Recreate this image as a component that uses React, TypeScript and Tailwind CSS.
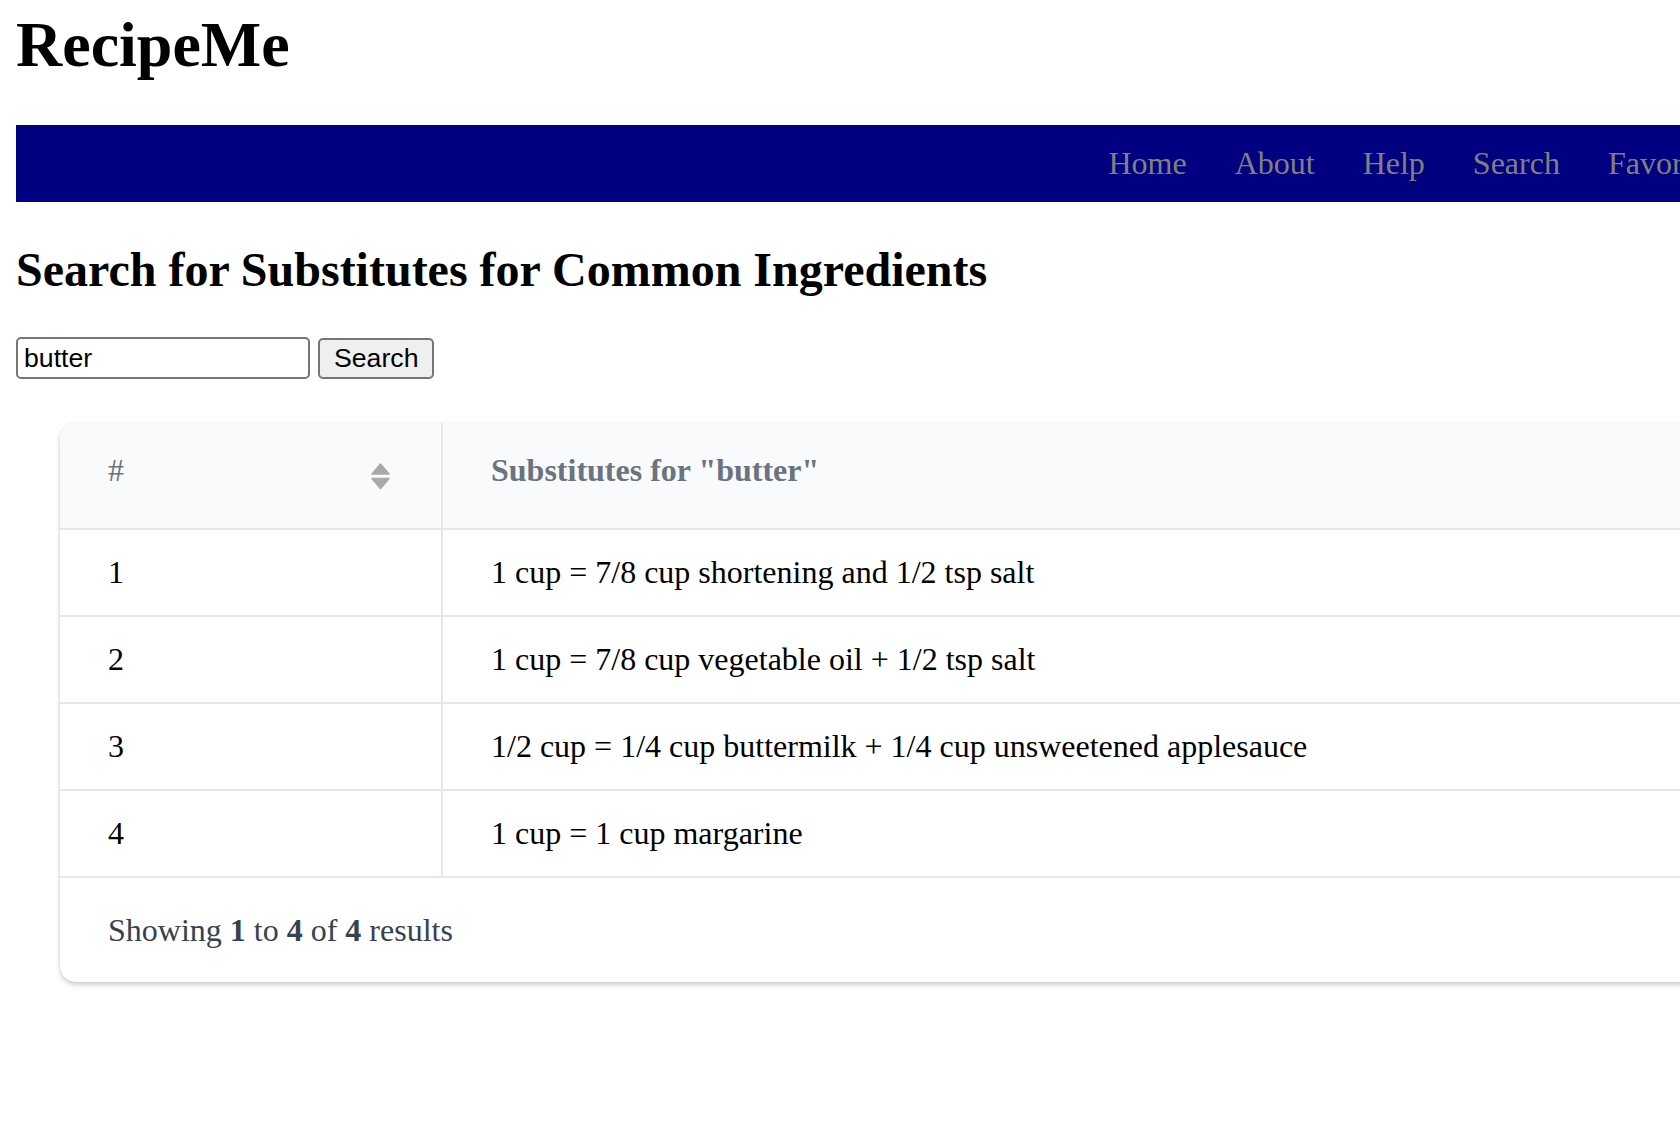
const rows = [
  "1 cup = 7/8 cup shortening and 1/2 tsp salt",
  "1 cup = 7/8 cup vegetable oil + 1/2 tsp salt",
  "1/2 cup = 1/4 cup buttermilk + 1/4 cup unsweetened applesauce",
  "1 cup = 1 cup margarine",
];

const links = ["Home", "About", "Help", "Search", "Favorites"];

function SortIcon() {
  return (
    <svg width="19" height="27" viewBox="0 0 19 27" aria-hidden="true">
      <path d="M9.5 1 L18 11 H1 Z" fill="#a9a9a9" stroke="#a9a9a9" strokeWidth="1.5" strokeLinejoin="round" />
      <path d="M1 15.5 H18 L9.5 25.5 Z" fill="#a9a9a9" stroke="#a9a9a9" strokeWidth="1.5" strokeLinejoin="round" />
    </svg>
  );
}

export default function App() {
  const query = "butter";

  return (
    <div className="h-[1134px] w-[1680px] overflow-hidden bg-white px-4 pt-2 font-['Liberation_Serif',serif] leading-[normal] text-black">
      <h1 className="mb-[43px] text-[64px] font-bold leading-[normal]">RecipeMe</h1>

      <nav className="flex h-[77px] w-[1735px] items-center justify-end bg-[#000080]">
        {links.map((link) => (
          <a key={link} className="px-6 text-[32px] leading-[normal] text-[#808080]">
            {link}
          </a>
        ))}
      </nav>

      <h2 className="my-[40px] text-[48px] font-bold leading-[normal]">
        Search for Substitutes for Common Ingredients
      </h2>

      <form className="flex items-center gap-[8px] font-['Liberation_Sans',Arial,sans-serif] text-[26.67px]">
        <input
          type="text"
          defaultValue={query}
          className="h-[42px] w-[294px] rounded-[5px] border-2 border-[#767676] px-[6px] text-black outline-none"
        />
        <button
          type="button"
          className="h-[41px] rounded-[5px] border-2 border-[#767676] bg-[#efefef] px-[14px] leading-[normal] text-black"
        >
          Search
        </button>
      </form>

      <div className="ml-[44px] mt-[44px] w-[1800px] overflow-hidden rounded-[16px] bg-white shadow-[0_3px_5px_rgba(0,0,0,0.18),0_0_2px_rgba(0,0,0,0.12)]">
        <div className="grid grid-cols-[383px_1fr] border-b-2 border-[#e5e7eb] bg-[#f9fafb]">
          <div className="flex h-[105px] items-center justify-between border-r-2 border-[#e5e7eb] pl-[48px] pr-[51px] text-[32px] text-[#6b7280]">
            <span className="pb-[10px]">#</span>
            <span className="pt-[2px]">
              <SortIcon />
            </span>
          </div>
          <div className="flex h-[105px] items-center px-[48px] pb-[10px] text-[32px] font-bold text-[#6b7280]">
            Substitutes for "{query}"
          </div>
        </div>

        {rows.map((row, i) => (
          <div key={i} className="grid grid-cols-[383px_1fr] border-b-2 border-[#e5e7eb]">
            <div className="flex h-[85px] items-center border-r-2 border-[#e5e7eb] px-[48px] text-[32px]">
              {i + 1}
            </div>
            <div className="flex h-[85px] items-center px-[48px] text-[32px]">{row}</div>
          </div>
        ))}

        <div className="flex h-[104px] items-center px-[48px] text-[32px] text-[#374151]">
          <span>
            Showing <b>1</b> to <b>{rows.length}</b> of <b>{rows.length}</b> results
          </span>
        </div>
      </div>
    </div>
  );
}
